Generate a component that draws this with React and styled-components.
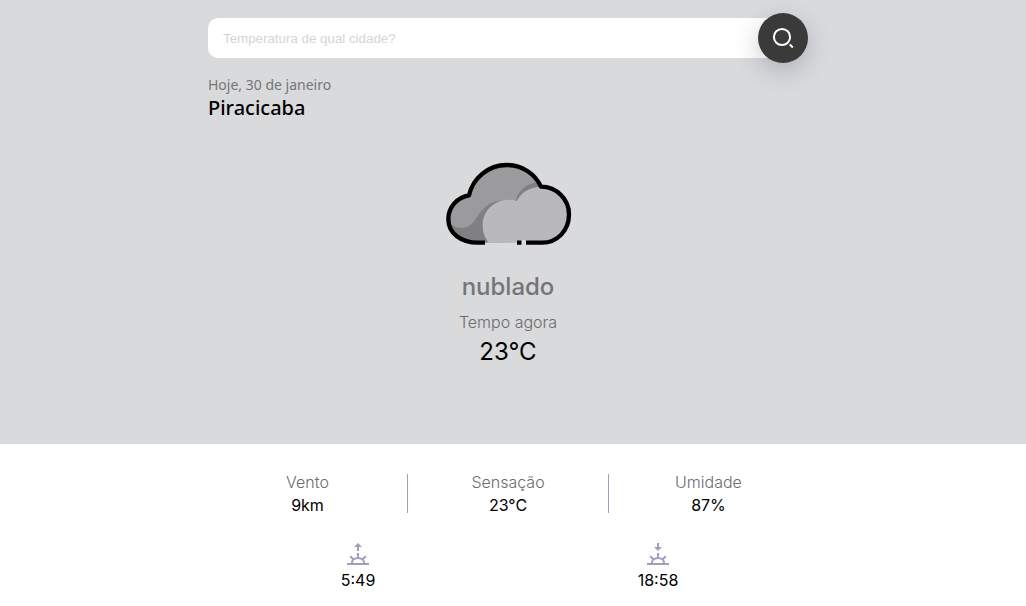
import React from 'react';
import styled, { createGlobalStyle } from 'styled-components';

const GlobalStyle = createGlobalStyle`
  *, *::before, *::after { box-sizing: border-box; }
  body {
    margin: 0;
    background: #fff;
    color: #000;
    font-family: Inter, "Liberation Sans", sans-serif;
    font-size: 16px;
  }
  h1, h2, p, dl, dd { margin: 0; font-weight: 400; }
`;

const Band = styled.div`
  padding: ${({ $pad }) => $pad};
  padding-right: 10px;
  background: ${({ $tone }) => $tone};
`;

const Column = styled.div`
  width: 100%;
  max-width: 600px;
  margin: 0 auto;
`;

const SearchForm = styled.form`
  display: flex;
  align-items: center;
`;

const SearchInput = styled.input`
  flex: 1;
  min-width: 0;
  height: 40px;
  margin-right: -25px;
  padding: 0 35px 0 15px;
  border: 0;
  border-radius: 10px;
  outline: 0;
  background: #fff;
  color: #3a3a3a;
  font-family: "Liberation Sans", Arial, sans-serif;
  font-weight: 400;
  &::placeholder { color: #d4d5d7; opacity: 1; }
`;

const SearchButton = styled.button`
  display: flex;
  align-items: center;
  justify-content: center;
  width: 50px;
  height: 50px;
  padding: 0;
  border: 0;
  border-radius: 50%;
  background: #3a3a3a;
  color: #fff;
  box-shadow: 0 8px 24px rgba(58, 58, 93, 0.25);
  cursor: pointer;
  z-index: 1;
`;

const Place = styled.header`
  margin-top: 12px;
  font-family: "Noto Sans", sans-serif;
`;

const Today = styled.p`
  color: #757577;
  font-size: 14px;
  line-height: 20px;
`;

const City = styled.h1`
  font-size: 20px;
  font-weight: 500;
  line-height: 26px;
`;

const Now = styled.section`
  display: flex;
  flex-direction: column;
  align-items: center;
  margin-top: 41px;
`;

const Condition = styled.h2`
  margin-top: 25px;
  color: #757577;
  font-size: 24px;
  font-weight: 500;
  line-height: 32px;
`;

const Caption = styled.p`
  margin-top: 7px;
  color: #6c6c6e;
  font-weight: 300;
  line-height: 24px;
`;

const Temperature = styled.p`
  font-size: 24px;
  line-height: 36px;
`;

const Stats = styled.dl`
  display: grid;
  grid-template-columns: repeat(3, 1fr);
`;

const Stat = styled.div`
  height: 39px;
  text-align: center;
  &:first-child { border-right: 1px solid #a09fbc; }
  &:last-child { border-left: 1px solid #a09fbc; }
`;

const StatName = styled.dt`
  color: #6c6c6e;
  font-weight: 300;
  line-height: 16px;
`;

const StatValue = styled.dd`
  line-height: 30px;
`;

const SunTimes = styled.div`
  display: grid;
  grid-template-columns: repeat(2, 1fr);
  margin-top: 29px;
`;

const SunTime = styled.div`
  display: flex;
  flex-direction: column;
  align-items: center;
  line-height: 28px;
`;

function SearchIcon() {
  return (
    <svg width="24" height="24" viewBox="0 0 24 24" fill="none" stroke="currentColor" strokeWidth="2" aria-hidden="true">
      <circle cx="11" cy="11" r="8.1" />
      <path d="M18.7 18.4 L21.8 21.5" />
    </svg>
  );
}

function CloudIcon() {
  return (
    <svg width="128" height="84" viewBox="24 36 384 252" role="img" aria-label="nublado">
      <path d="M125 278 C78 278 37 252 37 207 C37 172 64 141 99 136 C110 86 156 45 212 45 C258 45 297 71 315 110 L300 278 Z" fill="#9b9b9d" />
      <path d="M41 218 C62 241 98 240 118 209 C140 174 160 153 203 151 L218 278 L125 278 C85 278 48 258 41 218 Z" fill="#808082" />
      <path d="M238 154 C245 122 274 98 310 97 L318 112 L280 150 Z" fill="#808082" />
      <path d="M158 278 C146 263 140 247 140 225 C140 182 175 149 219 149 Q231 149 242 153 C256 126 284 110 317 110 C363 110 398 149 398 193 C398 242 363 278 318 278 Z" fill="#b9b8bd" />
      <path d="M147 278 H125 C78 278 37 252 37 207 C37 172 64 141 99 136 C110 86 156 45 212 45 C258 45 297 71 315 110 C363 110 399 149 399 193 C399 242 364 278 318 278 H270 M243 278 H257" fill="none" stroke="#000" strokeWidth="13" strokeLinejoin="round" />
      <path d="M257 271 H270 V285 H257 Z M147 278 H243 V285 H147 Z" fill="#d9dadc" />
    </svg>
  );
}

function SunIcon({ setting }) {
  return (
    <svg width="24" height="24" viewBox="0 0 24 24" fill="none" stroke="#a09fbc" strokeWidth="2" aria-hidden="true">
      <path d="M1 22 H23 M6 21 V20.5 A6 4.5 0 0 1 18 20.5 V21 M12 11 V16 M4.2 14.2 L7 17 M19.8 14.2 L17 17" />
      {setting ? (
        <>
          <path d="M12 1 V6" />
          <path d="M8 5 H16 L12 9 Z" fill="#a09fbc" stroke="none" />
        </>
      ) : (
        <>
          <path d="M12 4 V9" />
          <path d="M8 5 H16 L12 1 Z" fill="#a09fbc" stroke="none" />
        </>
      )}
    </svg>
  );
}

const stats = [
  { name: 'Vento', value: '9km' },
  { name: 'Sensação', value: '23°C' },
  { name: 'Umidade', value: '87%' },
];

export default function App() {
  return (
    <>
      <GlobalStyle />
      <main>
        <Band $tone="#d9dadc" $pad="13px 0 74px">
          <Column>
            <SearchForm role="search" onSubmit={(event) => event.preventDefault()}>
              <SearchInput type="text" aria-label="Cidade" placeholder="Temperatura de qual cidade?" />
              <SearchButton type="submit" aria-label="Buscar">
                <SearchIcon />
              </SearchButton>
            </SearchForm>
            <Place>
              <Today>Hoje, 30 de janeiro</Today>
              <City>Piracicaba</City>
            </Place>
            <Now>
              <CloudIcon />
              <Condition>nublado</Condition>
              <Caption>Tempo agora</Caption>
              <Temperature>23°C</Temperature>
            </Now>
          </Column>
        </Band>
        <Band $tone="#fff" $pad="30px 0 12px">
          <Column>
            <Stats>
              {stats.map(({ name, value }) => (
                <Stat key={name}>
                  <StatName>{name}</StatName>
                  <StatValue>{value}</StatValue>
                </Stat>
              ))}
            </Stats>
            <SunTimes>
              <SunTime>
                <SunIcon />
                <time>5:49</time>
              </SunTime>
              <SunTime>
                <SunIcon setting />
                <time>18:58</time>
              </SunTime>
            </SunTimes>
          </Column>
        </Band>
      </main>
    </>
  );
}
